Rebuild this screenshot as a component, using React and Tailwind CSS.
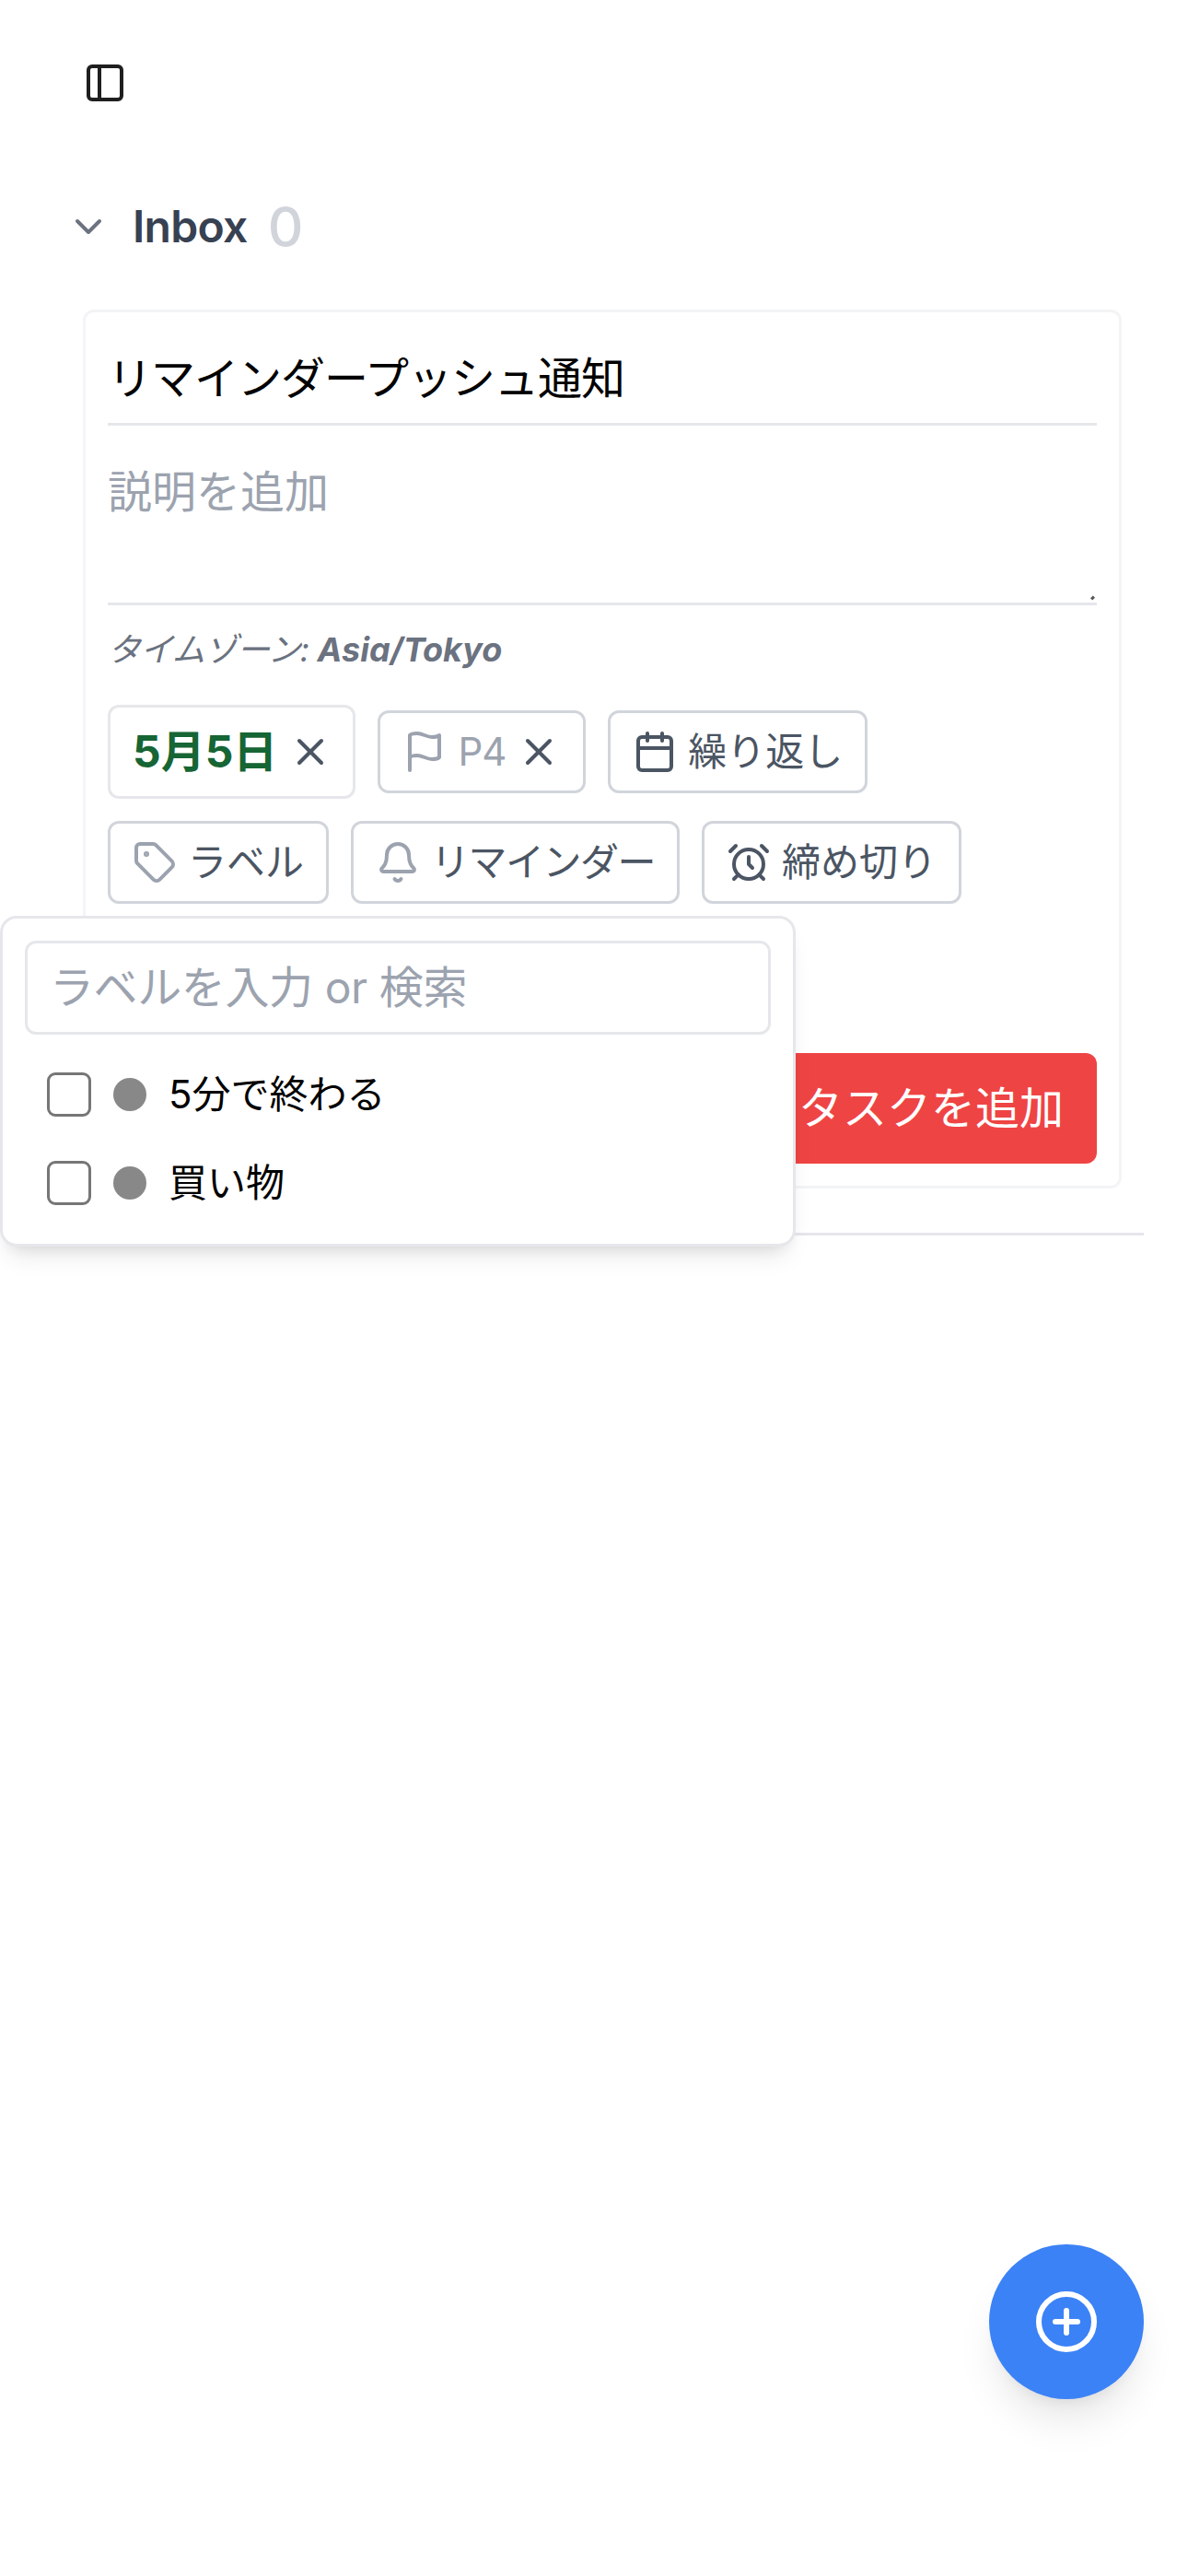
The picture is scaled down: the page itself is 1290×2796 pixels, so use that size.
import { PanelLeft, ChevronDown, X, Calendar, Tag, Bell, AlarmClock, CirclePlus } from "lucide-react";

const FlagIcon = () => (
  <svg
    width="48"
    height="48"
    viewBox="0 0 24 24"
    fill="none"
    stroke="currentColor"
    strokeWidth="2"
    strokeLinecap="round"
    strokeLinejoin="round"
    className="shrink-0 text-[#9ca3af]"
  >
    <path d="M4 15s1-1 4-1 5 2 8 2 4-1 4-1V3s-1 1-4 1-5-2-8-2-4 1-4 1z" />
    <line x1="4" y1="22" x2="4" y2="15" />
  </svg>
);

const Chip = ({ icon, children, className = "" }) => (
  <div
    className={`flex h-[90px] items-center gap-[12px] rounded-xl border-[3px] border-[#d1d5db] px-[24px] text-[42px] leading-[60px] text-[#4b5563] ${className}`}
  >
    {icon}
    {children}
  </div>
);

const LabelRow = ({ name }) => (
  <div className="flex h-[96px] items-center gap-[24px] px-[24px]">
    <div className="h-[48px] w-[48px] rounded-[9px] border-[3px] border-[#767676] bg-white" />
    <div className="h-[36px] w-[36px] rounded-full bg-[#888888]" />
    <span className="text-[42px] leading-[60px] text-black">{name}</span>
  </div>
);

export default function App() {
  return (
    <div className="relative h-[2796px] overflow-hidden bg-white font-[Inter,'Noto_Sans_CJK_JP',sans-serif]">
      <div className="pl-[90px] pt-[66px]">
        <PanelLeft size={48} className="text-[#1f1f1f]" />
      </div>

      <div className="pl-[72px] pr-[48px] pt-[108px]">
        <div className="flex h-[48px] items-center">
          <ChevronDown size={48} className="text-[#6b7280]" />
          <span className="ml-[24px] text-[48px] font-semibold leading-[72px] tracking-[-0.7px] text-[#374151]">Inbox</span>
          <span className="ml-[22px] text-[60px] font-medium leading-[84px] text-[#d1d5db]">0</span>
        </div>

        <div className="border-b-[3px] border-[#e5e7eb] pb-[48px] pt-[66px]">
          <div className="ml-[18px] mr-[24px] rounded-xl border-[3px] border-[#f3f4f6] p-[24px]">
            <div className="border-b-[3px] border-[#e5e7eb] py-[12px] text-[48px] leading-[72px] tracking-[-1px] text-black">
              リマインダープッシュ通知
            </div>

            <div className="relative mt-[24px] h-[171px] border-b-[3px] border-[#e5e7eb] py-[12px] text-[48px] leading-[72px] text-[#9ca3af]">
              説明を追加
              <span className="absolute bottom-[3px] right-[3px] h-[4px] w-[3px] rotate-45 bg-[#555555]" />
            </div>

            <p className="mt-[24px] text-[36px] italic leading-[48px] text-[#6b7280]">
              <span className="tracking-[-0.8px]">タイムゾーン: </span>
              <span className="font-bold">Asia/Tokyo</span>
            </p>

            <div className="mt-[36px] flex flex-wrap items-center gap-[24px]">
              <div className="flex h-[102px] items-center gap-[12px] rounded-xl border-[3px] border-[#e5e7eb] pl-[24px] pr-[22px]">
                <span className="text-[48px] font-bold leading-[72px] text-[#166534]">5月5日</span>
                <X size={48} className="text-[#4b5563]" />
              </div>
              <Chip icon={<FlagIcon />}>
                <span className="tracking-[-1px] text-[#9ca3af]">P4</span>
                <X size={48} className="text-[#4b5563]" />
              </Chip>
              <Chip icon={<Calendar size={48} className="text-[#4b5563]" />}>繰り返し</Chip>
            </div>

            <div className="mt-[24px] flex items-center gap-[24px]">
              <Chip icon={<Tag size={48} className="text-[#9ca3af]" />}>ラベル</Chip>
              <Chip icon={<Bell size={48} className="text-[#9ca3af]" />} className="tracking-[-1.5px]">
                リマインダー
              </Chip>
              <Chip icon={<AlarmClock size={48} className="text-[#4b5563]" />}>締め切り</Chip>
            </div>

            <div className="mt-[162px] flex justify-end">
              <button className="h-[120px] rounded-xl bg-[#ef4444] px-[36px] text-[48px] leading-[72px] text-white">
                タスクを追加
              </button>
            </div>
          </div>
        </div>
      </div>

      <div className="absolute left-0 top-[994px] w-[864px] rounded-[18px] border-[3px] border-[#e5e7eb] bg-white px-[24px] pb-[18px] pt-[24px] shadow-[0_18px_27px_-9px_rgba(0,0,0,0.1),0_9px_15px_-9px_rgba(0,0,0,0.1)]">
        <div className="h-[102px] rounded-xl border-[3px] border-[#e5e7eb] px-[24px] py-[12px] text-[48px] leading-[72px] tracking-[-0.4px] text-[#9ca3af]">
          ラベルを入力 or 検索
        </div>
        <div className="mt-[17px]">
          <LabelRow name="5分で終わる" />
          <LabelRow name="買い物" />
        </div>
      </div>

      <button className="absolute bottom-[192px] right-[48px] flex h-[168px] w-[168px] items-center justify-center rounded-full bg-[#3b82f6] shadow-[0_30px_45px_-9px_rgba(0,0,0,0.1),0_12px_18px_-12px_rgba(0,0,0,0.1)]">
        <CirclePlus size={72} className="text-white" />
      </button>
    </div>
  );
}
